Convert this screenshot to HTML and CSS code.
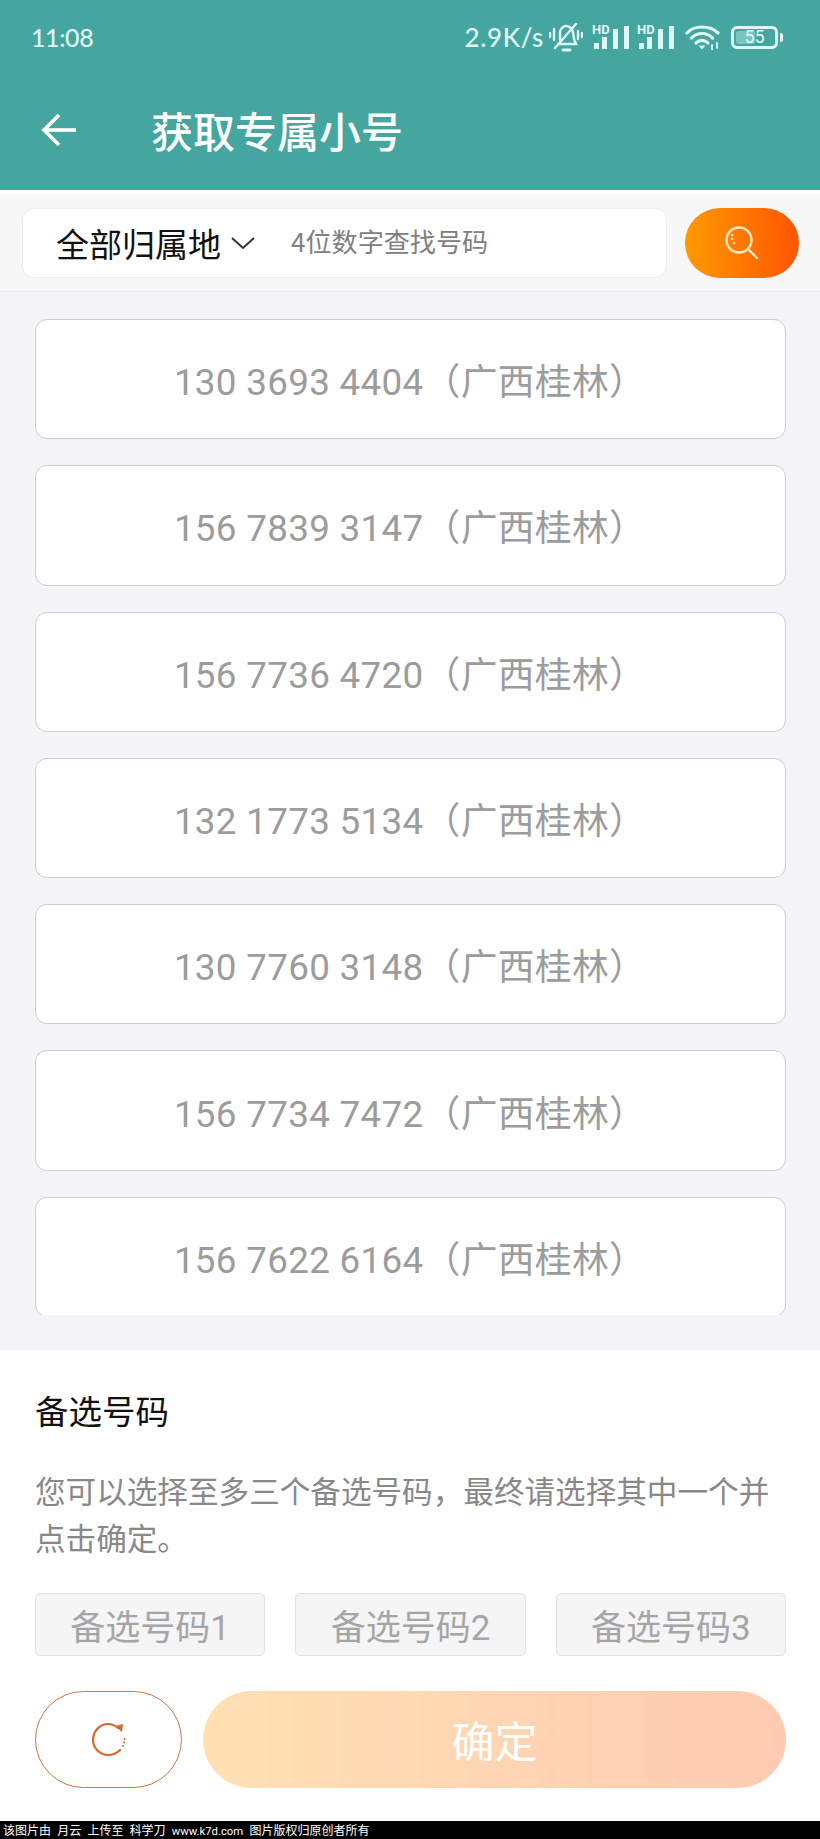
FILE: index.html
```html
<!DOCTYPE html>
<html lang="zh">
<head>
<meta charset="utf-8">
<title>获取专属小号</title>
<link rel="stylesheet" href="styles.css">
</head>
<body>
<div class="app">
  <header class="header">
    <div class="status">
      <span class="time">11:08</span>
      <div class="status-right">
        <span class="speed">2.9K/s</span>
        <svg class="ic-bell" width="34" height="32" viewBox="0 0 34 32" fill="none" stroke="#dff8f5" stroke-width="2.400" stroke-linecap="round">
          <path d="M11 19v-7c0-4 3-7 6-7 4 0 6 3 7 6l1 7 2 5H9"/>
          <path d="M6 27 27 3"/>
          <path d="M14 29h7" stroke-width="2.800"/>
          <path d="M1 12v4M5 8v11M29 10v8M33 12v4"/>
        </svg>
        <svg class="ic-signal" width="37" height="30" viewBox="0 -4 37 30">
          <text x="0" y="10" class="hd">HD</text>
          <g fill="#dff8f5"><rect x="2" y="19" width="5" height="6"/><rect x="10" y="13" width="5" height="12"/><rect x="21" y="5" width="5" height="20"/><rect x="32" y="2" width="5" height="23"/></g>
        </svg>
        <svg class="ic-signal" width="37" height="30" viewBox="0 -4 37 30">
          <text x="0" y="10" class="hd">HD</text>
          <g fill="#dff8f5"><rect x="2" y="19" width="5" height="6"/><rect x="10" y="13" width="5" height="12"/><rect x="21" y="5" width="5" height="20"/><rect x="32" y="2" width="5" height="23"/></g>
        </svg>
        <svg class="ic-wifi" width="35" height="26" viewBox="0 0 35 26" fill="none" stroke="#dff8f5" stroke-width="3.200" stroke-linecap="round">
          <path d="M2 9C9 1 25 1 33 9"/>
          <path d="M6.500 14c6-6 15-6 21 0"/>
          <path d="M11 19c4-3.500 8-3.500 12 0"/>
          <path d="M13.500 21.500h7L17 25.500z" fill="#dff8f5" stroke="none"/>
          <path d="M27 21v5M32 19v5" stroke-width="1.800"/>
        </svg>
        <div class="battery">
          <div class="battery-body"><span class="battery-fill"></span><span class="battery-num">55</span></div>
          <span class="battery-cap"></span>
        </div>
      </div>
    </div>
    <div class="appbar">
      <svg class="back" width="35" height="34" viewBox="0 0 35 34" fill="none" stroke="#fff" stroke-width="3.600">
        <path d="M35 17H3"/>
        <path d="M18 2 3 17l15 15"/>
      </svg>
      <h1 class="title">获取专属小号</h1>
    </div>
  </header>

  <div class="searchbar">
    <div class="search-input">
      <span class="region">全部归属地</span>
      <svg class="chev" width="26" height="14" viewBox="0 0 26 14" fill="none" stroke="#333" stroke-width="2"><path d="M2 2l11 10L24 2"/></svg>
      <span class="placeholder">4位数字查找号码</span>
    </div>
    <button class="search-btn" type="button">
      <svg width="34" height="34" viewBox="0 0 34 34" fill="none" stroke="#ffe9c8" stroke-width="2.400" stroke-linecap="round">
        <circle cx="14" cy="14" r="12.500"/>
        <path d="M23.500 23.500 32 32"/>
        <path d="M7 9h.1M7 13h.1M9 17h.1" stroke-width="2.600"/>
      </svg>
    </button>
  </div>

  <main class="list-wrap">
    <div class="list">
      <div class="card">130 3693 4404（广西桂林）</div>
      <div class="card">156 7839 3147（广西桂林）</div>
      <div class="card">156 7736 4720（广西桂林）</div>
      <div class="card">132 1773 5134（广西桂林）</div>
      <div class="card">130 7760 3148（广西桂林）</div>
      <div class="card">156 7734 7472（广西桂林）</div>
      <div class="card">156 7622 6164（广西桂林）</div>
    </div>
  </main>

  <section class="panel">
    <h2 class="panel-title">备选号码</h2>
    <p class="panel-desc">您可以选择至多三个备选号码，最终请选择其中一个并点击确定。</p>
    <div class="slots">
      <div class="slot">备选号码1</div>
      <div class="slot">备选号码2</div>
      <div class="slot">备选号码3</div>
    </div>
    <div class="actions">
      <button class="refresh" type="button">
        <svg width="36" height="36" viewBox="0 0 36 36" fill="none" stroke="#d9662c" stroke-width="2.200" stroke-linecap="round">
          <path d="M27 6C24 3.500 21 2 17 2 9 2 2 9 2 18c0 8 7 15 15 15 5 0 9-2 12-5"/>
          <path d="M24 4l8-2-1 8z" fill="#d9662c" stroke="none"/>
          <path d="M32 24h.1M33 20.500h.1M33.500 17h.1" stroke-width="1.800"/>
        </svg>
      </button>
      <button class="confirm" type="button">确定</button>
    </div>
  </section>

  <footer class="watermark">该图片由 月云 上传至 科学刀 <span class="wm-url">www.k7d.com</span> 图片版权归原创者所有</footer>
</div>
</body>
</html>
```

FILE: styles.css
```css
* { box-sizing: border-box; }
html, body { margin: 0; padding: 0; }
body {
  width: 820px;
  height: 1839px;
  overflow: hidden;
  font-family: Roboto, "Noto Sans CJK SC", sans-serif;
  background: #fff;
}
.app { display: flex; flex-direction: column; height: 1839px; }

.header { height: 190px; background: #45a6a0; color: #fff; display: flex; flex-direction: column; flex: none; }
.status { height: 70px; padding: 19px 37px 0 31px; display: flex; justify-content: space-between; align-items: flex-start; color: #dff8f5; }
.time { font: 500 25px/36px Lato, sans-serif; letter-spacing: -.4px; }
.status-right { display: flex; align-items: center; height: 36px; }
.speed { font: 500 26px/36px Lato, sans-serif; letter-spacing: .6px; margin-right: 5px; }
.hd { font: 700 13px Roboto, sans-serif; fill: #dff8f5; }
.ic-bell { margin-right: 9px; }
.ic-signal { margin-right: 8px; margin-bottom: 4px; }
.ic-wifi { margin-left: 3px; margin-right: 11px; }
.battery { display: flex; align-items: center; }
.battery-body { width: 47px; height: 23px; border: 3px solid #dff8f5; border-radius: 6px; position: relative; display: flex; align-items: center; justify-content: center; }
.battery-fill { position: absolute; left: 2px; top: 2px; bottom: 2px; width: 19px; background: rgba(223,248,245,.35); border-radius: 2px; }
.battery-num { position: relative; font: 400 18px/1 Roboto, sans-serif; color: #dff8f5; }
.battery-cap { width: 3px; height: 9px; margin-left: 2px; background: #dff8f5; border-radius: 0 2px 2px 0; }
.appbar { flex: 1; display: flex; align-items: center; padding: 0 0 0 41px; }
.back { display: block; }
.title { margin: 0 0 0 75px; font: 500 42px/60px "Noto Sans CJK SC", sans-serif; color: #fff; }

.searchbar { flex: none; height: 98px; margin-top: 4px; padding: 14px 21px 0 22px; display: flex; gap: 18px; align-items: flex-start; background: #f7f7f8; border-bottom: 1px solid #e6e6e8; }
.search-input { width: 645px; height: 70px; background: #fff; border: 1px solid #ebebed; border-radius: 12px; display: flex; align-items: center; padding-left: 33px; }
.region { font: 400 33px/44px "Noto Sans CJK SC", sans-serif; color: #111; }
.chev { margin-left: 9px; }
.placeholder { margin: -4px 0 0 35px; font: 400 26.100px/40px "Noto Sans CJK SC", sans-serif; color: #808080; }
.search-btn { width: 114px; height: 70px; border: 0; padding: 0; border-radius: 35px; background: linear-gradient(90deg, #ff9a00, #ff5500); display: flex; align-items: center; justify-content: center; }

.list-wrap { flex: 1; min-height: 0; background: #f3f3f8; padding-bottom: 35px; display: flex; }
.list { flex: 1; overflow: hidden; padding: 27px 34px 0 35px; display: flex; flex-direction: column; gap: 26px; }
.card { flex: none; height: 120.300px; background: #fff; border: 1px solid #cdcdcf; border-radius: 12px; display: flex; align-items: center; justify-content: center; font-size: 36.800px; color: #9c9c9c; padding-right: 1px; letter-spacing: .3px; }

.panel { flex: none; height: 471px; background: #fff; padding: 36px 34px 0 35px; }
.panel-title { margin: 0; font: 400 33.500px/48px "Noto Sans CJK SC", sans-serif; color: #111; }
.panel-desc { margin: 33px 0 0; font: 400 30.600px/47px "Noto Sans CJK SC", sans-serif; color: #888; }
.slots { display: flex; gap: 30px; margin-top: 32px; }
.slot { flex: 1; height: 63px; background: #f5f5f6; border: 1px solid #e2e2e4; border-radius: 5px; display: flex; align-items: center; justify-content: center; font-size: 35px; color: #a5a5a8; }
.actions { display: flex; gap: 21px; margin-top: 35px; }
.refresh { width: 147px; height: 97px; border: 1px solid #d2733d; border-radius: 49px; background: #fff; padding: 0; display: flex; align-items: center; justify-content: center; }
.confirm { flex: 1; height: 97px; border: 0; border-radius: 49px; background: linear-gradient(90deg, #ffe1b3, #ffcab2); color: #fff; font: 400 43px/1 "Noto Sans CJK SC", sans-serif; padding: 0; }

.watermark { flex: none; height: 18px; background: #000; color: #fff; font: 400 12px/18px "Noto Sans CJK SC", sans-serif; padding-left: 3px; white-space: pre; word-spacing: 3.500px; }
.wm-url { font-family: Roboto, sans-serif; font-size: 11.300px; }
```
